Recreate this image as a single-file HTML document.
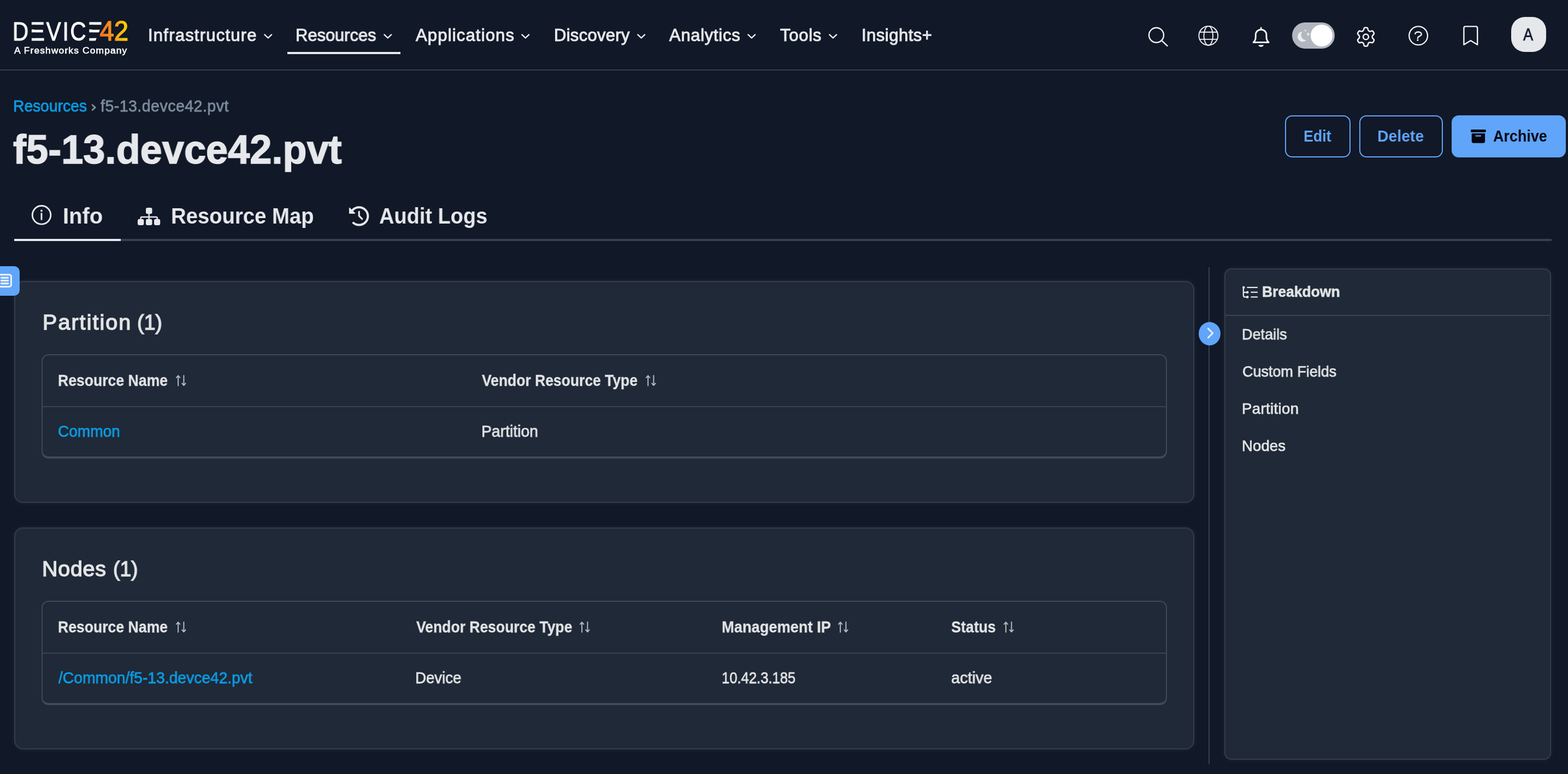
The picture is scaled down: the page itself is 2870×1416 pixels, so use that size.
<!DOCTYPE html>
<html lang="en">
<head>
<meta charset="utf-8">
<title>f5-13.devce42.pvt - Resources - Device42</title>
<style>
*{box-sizing:border-box;margin:0;padding:0}
html,body{width:2870px;height:1416px;overflow:hidden;background:#111827}
body{position:relative;font-family:"Liberation Sans",Arial,sans-serif;color:#e6e8ec}
a{color:inherit;text-decoration:none}
button{font:inherit;color:inherit;background:none;border:0}
svg{position:absolute;overflow:visible}
.t{will-change:transform;position:absolute;white-space:pre;transform-origin:0 0;font-weight:400;display:block}
.lnk{color:#0d9ce4}
.mut{color:#7a8a98}
.td,.th,.ctt{color:#e3e4e6}
h1,h2{font:inherit}
.btd{color:#030712}
.bt{color:#60a5fa}
.avt{color:#111827}
.lgm,.lgs{color:#fff}
.ic{fill:none;stroke:#e6e8ec;stroke-linecap:round;stroke-linejoin:round}
/* header */
.topbar .ic{stroke:#f2f3f5}
.topbar{position:absolute;left:0;top:0;width:2870px;height:129px;border-bottom:2px solid #363c4a}
.nav-active{position:absolute;left:526px;top:95px;width:207px;height:4px;background:#e6e8ec}
.toggle{position:absolute;left:2365px;top:41px;width:78px;height:48px;border-radius:24px;background:#b2b7bf}
.knob{position:absolute;left:34.3px;top:4px;width:40px;height:40px;border-radius:50%;background:#fff}
.avatar{position:absolute;left:2766px;top:31px;width:64px;height:64px;border-radius:25px;background:#e5e7eb}
/* page head */
.btn{position:absolute;top:211px;height:77px;display:block;border:2px solid #60a5fa;border-radius:13px}
.btn.primary{background:#60a5fa}
.tabline{position:absolute;left:26px;top:437px;width:2814px;height:4px;background:#383f4e}
.tabline i{position:absolute;left:0;top:0;width:195px;height:4px;background:#e6e8ec}
/* cards */
.card{position:absolute;background:#1f2937;border:2px solid #343c4a;border-radius:16px;box-shadow:0 0 8px rgba(255,255,255,.075)}
.tbl{position:absolute;border:2px solid #404956;border-bottom-width:4px;border-radius:13px}
.tbl .hr{position:absolute;left:0;right:0;top:93px;height:2px;background:#3a4350}
.sidetab{position:absolute;left:0;top:487px;width:36px;height:54px;background:#60a5fa;border-radius:0 10px 10px 0}
.vline{position:absolute;left:2212px;top:489px;width:2px;height:909px;background:#383f4e}
.collapse{position:absolute;left:2194px;top:589px;width:40px;height:43px;border-radius:50%;background:#60a5fa}
.bkline{position:absolute;left:0;right:0;top:83px;height:2px;background:#3b4452}
.srt path{fill:none;stroke:#b5b9c1;stroke-width:2;stroke-linecap:round;stroke-linejoin:round}
#n1{font-size:31px;line-height:37px;-webkit-text-stroke:1.0px currentColor;letter-spacing:1.22px;left:270.8px;top:46.0px;}
#n2{font-size:31px;line-height:37px;-webkit-text-stroke:1.0px currentColor;transform:scaleX(0.9945);left:541.1px;top:46.0px;}
#n3{font-size:31px;line-height:37px;-webkit-text-stroke:1.0px currentColor;letter-spacing:1.17px;left:761.0px;top:46.0px;}
#n4{font-size:31px;line-height:37px;-webkit-text-stroke:1.0px currentColor;letter-spacing:0.30px;left:1013.9px;top:46.0px;}
#n5{font-size:31px;line-height:37px;-webkit-text-stroke:1.0px currentColor;letter-spacing:0.70px;left:1225.0px;top:46.0px;}
#n6{font-size:31px;line-height:37px;-webkit-text-stroke:1.0px currentColor;letter-spacing:0.72px;left:1428.4px;top:46.0px;}
#n7{font-size:31px;line-height:37px;-webkit-text-stroke:1.0px currentColor;letter-spacing:0.50px;left:1576.6px;top:46.0px;}
#lg1{font-size:48.7px;line-height:58px;-webkit-text-stroke:1.0px currentColor;letter-spacing:3.37px;transform:scaleX(0.8300);left:22.8px;top:27.7px;}
#lg2{font-size:17.4px;line-height:21px;-webkit-text-stroke:0.6px currentColor;letter-spacing:1.14px;left:25.7px;top:81.5px;}
#bc1{font-size:28.6px;line-height:34px;-webkit-text-stroke:0.8px currentColor;transform:scaleX(0.9873);left:23.5px;top:176.8px;}
#bc2{font-size:28.6px;line-height:34px;-webkit-text-stroke:0.8px currentColor;letter-spacing:0.44px;left:184.3px;top:176.8px;}
#h1{font-size:75px;line-height:90px;font-weight:700;-webkit-text-stroke:1.5px currentColor;transform:scaleX(0.9622);left:24.0px;top:228.1px;}
#tb1{font-size:40.5px;line-height:49px;font-weight:700;transform:scaleX(0.9857);left:115.0px;top:371.2px;}
#tb2{font-size:40.5px;line-height:49px;font-weight:700;transform:scaleX(0.9449);left:312.6px;top:371.2px;}
#tb3{font-size:40.5px;line-height:49px;font-weight:700;transform:scaleX(0.9368);left:693.8px;top:371.2px;}
#b1{font-size:29.5px;line-height:35px;font-weight:700;transform:scaleX(0.9056);left:32.2px;top:18.1px;}
#b2{font-size:29.5px;line-height:35px;font-weight:700;transform:scaleX(0.9605);left:31.1px;top:18.1px;}
#b3{font-size:29.5px;line-height:35px;font-weight:700;transform:scaleX(0.9123);left:73.9px;top:18.1px;}
#c1a{font-size:39.5px;line-height:47px;-webkit-text-stroke:1.4px currentColor;letter-spacing:2.05px;left:49.6px;top:50.3px;}
#c1b{font-size:39.5px;line-height:47px;-webkit-text-stroke:1.4px currentColor;transform:scaleX(0.9511);left:223.0px;top:50.3px;}
#c2a{font-size:39.5px;line-height:47px;-webkit-text-stroke:1.4px currentColor;letter-spacing:0.72px;left:49.3px;top:50.3px;}
#c2b{font-size:39.5px;line-height:47px;-webkit-text-stroke:1.4px currentColor;transform:scaleX(0.9444);left:178.6px;top:50.3px;}
#t1h1{font-size:30px;line-height:36px;font-weight:700;-webkit-text-stroke:0.3px currentColor;transform:scaleX(0.8862);left:28.4px;top:27.6px;}
#t1h2{font-size:30px;line-height:36px;font-weight:700;-webkit-text-stroke:0.3px currentColor;transform:scaleX(0.8826);left:804.3px;top:27.6px;}
#t1c1{font-size:29.0px;line-height:35px;-webkit-text-stroke:0.75px currentColor;transform:scaleX(0.9670);left:28.4px;top:121.7px;}
#t1c2{font-size:29.0px;line-height:35px;-webkit-text-stroke:0.75px currentColor;transform:scaleX(0.9767);left:803.0px;top:121.7px;}
#t2h1{font-size:30px;line-height:36px;font-weight:700;-webkit-text-stroke:0.3px currentColor;transform:scaleX(0.8862);left:28.4px;top:27.6px;}
#t2h2{font-size:30px;line-height:36px;font-weight:700;-webkit-text-stroke:0.3px currentColor;transform:scaleX(0.8839);left:683.7px;top:27.6px;}
#t2h3{font-size:30px;line-height:36px;font-weight:700;-webkit-text-stroke:0.3px currentColor;transform:scaleX(0.9083);left:1242.7px;top:27.6px;}
#t2h4{font-size:30px;line-height:36px;font-weight:700;-webkit-text-stroke:0.3px currentColor;transform:scaleX(0.8900);left:1663.2px;top:27.6px;}
#t2c1{font-size:29.0px;line-height:35px;-webkit-text-stroke:0.75px currentColor;transform:scaleX(0.9742);left:28.6px;top:121.7px;}
#t2c2{font-size:29.0px;line-height:35px;-webkit-text-stroke:0.75px currentColor;transform:scaleX(0.9523);left:682.4px;top:121.7px;}
#t2c3{font-size:29.0px;line-height:35px;-webkit-text-stroke:0.75px currentColor;transform:scaleX(0.8820);left:1242.8px;top:121.7px;}
#t2c4{font-size:29.0px;line-height:35px;-webkit-text-stroke:0.75px currentColor;transform:scaleX(0.9878);left:1663.1px;top:121.7px;}
#bk0{font-size:28.2px;line-height:34px;font-weight:700;-webkit-text-stroke:0.6px currentColor;transform:scaleX(0.9387);left:67.4px;top:23.4px;}
#bk1{font-size:27.6px;line-height:33px;-webkit-text-stroke:0.75px currentColor;transform:scaleX(0.9793);left:30.3px;top:102.2px;}
#bk2{font-size:27.6px;line-height:33px;-webkit-text-stroke:0.75px currentColor;transform:scaleX(0.9766);left:30.9px;top:170.3px;}
#bk3{font-size:27.6px;line-height:33px;-webkit-text-stroke:0.75px currentColor;letter-spacing:0.36px;left:30.3px;top:238.4px;}
#bk4{font-size:27.6px;line-height:33px;-webkit-text-stroke:0.75px currentColor;letter-spacing:0.07px;left:30.3px;top:306.4px;}
#av{font-size:32px;line-height:38px;-webkit-text-stroke:0.7px currentColor;transform:scaleX(0.8500);left:22.1px;top:12.6px;}
</style>
</head>
<body>
<header class="topbar">
  <a class="logo" href="#" aria-label="Device42, a Freshworks company"><span id="lg1" class="t lgm">DEVICE</span><svg class="noink" style="left:0;top:0" width="240" height="128" viewBox="0 0 240 128" aria-hidden="true"><path fill="#111827" d="M55 45.3h9v8.5h-9z M55 59.3h9v10.4h-9z M160 45.3h9.3v8.5h-9.3z M160 59.3h9.3v10.4h-9.3z M186.6 45.3H191V76H174.2z"/></svg><svg class="l42" style="left:0;top:0" width="240" height="128" viewBox="0 0 240 128"><defs><linearGradient id="g42" gradientUnits="userSpaceOnUse" x1="183" y1="0" x2="233" y2="0"><stop offset="0" stop-color="#f26f21"/><stop offset="0.45" stop-color="#f7941d"/><stop offset="1" stop-color="#ffd200"/></linearGradient></defs><text x="182.4" y="73.5" font-family="'Liberation Sans',Arial,sans-serif" font-size="50" textLength="52.6" lengthAdjust="spacingAndGlyphs" fill="url(#g42)" stroke="url(#g42)" stroke-width="1.4">42</text></svg><span id="lg2" class="t lgs">A Freshworks Company</span></a>
  <nav class="mainnav" aria-label="Main">
    <a href="#"><span id="n1" class="t nv">Infrastructure</span><svg class="chev" style="left:482.6px;top:62px" width="16" height="9" viewBox="0 0 16 9" aria-hidden="true"><path class="ic" stroke-width="2.4" d="M1.4 1.4 L7.75 7.5 L14.1 1.4"/></svg></a>
    <a href="#" aria-current="page"><span id="n2" class="t nv">Resources</span><svg class="chev" style="left:701.9px;top:62px" width="16" height="9" viewBox="0 0 16 9" aria-hidden="true"><path class="ic" stroke-width="2.4" d="M1.4 1.4 L7.75 7.5 L14.1 1.4"/></svg></a>
    <a href="#"><span id="n3" class="t nv">Applications</span><svg class="chev" style="left:954.1px;top:62px" width="16" height="9" viewBox="0 0 16 9" aria-hidden="true"><path class="ic" stroke-width="2.4" d="M1.4 1.4 L7.75 7.5 L14.1 1.4"/></svg></a>
    <a href="#"><span id="n4" class="t nv">Discovery</span><svg class="chev" style="left:1165.6px;top:62px" width="16" height="9" viewBox="0 0 16 9" aria-hidden="true"><path class="ic" stroke-width="2.4" d="M1.4 1.4 L7.75 7.5 L14.1 1.4"/></svg></a>
    <a href="#"><span id="n5" class="t nv">Analytics</span><svg class="chev" style="left:1368.2px;top:62px" width="16" height="9" viewBox="0 0 16 9" aria-hidden="true"><path class="ic" stroke-width="2.4" d="M1.4 1.4 L7.75 7.5 L14.1 1.4"/></svg></a>
    <a href="#"><span id="n6" class="t nv">Tools</span><svg class="chev" style="left:1517.3px;top:62px" width="16" height="9" viewBox="0 0 16 9" aria-hidden="true"><path class="ic" stroke-width="2.4" d="M1.4 1.4 L7.75 7.5 L14.1 1.4"/></svg></a>
    <a href="#"><span id="n7" class="t nv">Insights+</span></a>
    <div class="nav-active"></div>
  </nav>
  <div class="tools">
    <button class="ib" aria-label="Search"><svg style="left:2100px;top:48px" width="40" height="40" viewBox="0 0 40 40"><circle class="ic" stroke-width="2.4" cx="16.5" cy="16.3" r="13.5"/><path class="ic" stroke-width="2.4" d="M26 25.8 L36.5 35.9"/></svg></button>
    <button class="ib" aria-label="Language"><svg style="left:2192px;top:45px" width="40" height="40" viewBox="0 0 40 40"><circle class="ic" stroke-width="1.9" cx="19.8" cy="20.3" r="17.4"/><ellipse class="ic" stroke-width="1.9" cx="19.8" cy="20.3" rx="8.3" ry="17.4"/><path class="ic" stroke-width="1.9" d="M3.8 13.8 H35.8 M3.8 26.9 H35.8"/></svg></button>
    <button class="ib" aria-label="Notifications"><svg style="left:2292px;top:49px" width="32" height="37" viewBox="0 0 32 37"><path class="ic" stroke-width="2.9" d="M2.1 28.5 C4.6 26.3 6.3 23.4 6.3 19 L6.3 14.8 C6.3 9 10.6 5.3 16.15 5.3 C21.7 5.3 26 9 26 14.8 L26 19 C26 23.4 27.7 26.3 30.2 28.5 Z M16.15 2 V3.6"/><path fill="#f0f1f4" d="M11.4 33.3 H20.9 A4.75 3.5 0 0 1 11.4 33.3 Z"/></svg></button>
    <div class="toggle" role="switch" aria-checked="true" aria-label="Dark mode"><svg style="left:0;top:0" width="78" height="48" viewBox="0 0 78 48"><path fill="#eceef1" d="M18.99 16.90 A9.2 9.2 0 1 0 25.91 32.40 A9.2 9.2 0 0 1 18.99 16.90Z"/><path fill="#eceef1" d="M24.3 11.5 Q24.3 14.7 27.5 14.7 Q24.3 14.7 24.3 17.9 Q24.3 14.7 21.1 14.7 Q24.3 14.7 24.3 11.5Z"/><path fill="#eceef1" d="M29.4 16.7 Q29.4 21.5 34.199999999999996 21.5 Q29.4 21.5 29.4 26.3 Q29.4 21.5 24.599999999999998 21.5 Q29.4 21.5 29.4 16.7Z"/></svg><div class="knob"></div></div>
    <button class="ib" aria-label="Settings"><svg style="left:2483.2px;top:49.2px" width="34" height="37" viewBox="0 0 34 37"><path class="ic" stroke-width="2.5" d="M11.2 7.9 Q12.8 6.9 13.2 4.8 L13.4 3.6 Q13.8 1.4 16.0 1.4 L18.0 1.4 Q20.2 1.4 20.6 3.6 L20.8 4.8 Q21.2 6.9 22.8 7.9 L22.8 7.9 Q24.4 8.8 26.5 8.1 L27.4 7.8 Q29.5 7.1 30.5 9.0 L31.6 10.8 Q32.6 12.8 31.0 14.3 L30.2 15.0 Q28.6 16.5 28.6 18.4 L28.6 18.4 Q28.6 20.3 30.2 21.8 L31.0 22.5 Q32.6 24.0 31.6 26.0 L30.5 27.8 Q29.5 29.7 27.4 29.0 L26.5 28.7 Q24.4 28.0 22.8 28.9 L22.8 28.9 Q21.2 29.9 20.8 32.0 L20.6 33.2 Q20.2 35.4 18.0 35.4 L16.0 35.4 Q13.8 35.4 13.4 33.2 L13.2 32.0 Q12.8 29.9 11.2 28.9 L11.2 28.9 Q9.6 28.0 7.5 28.7 L6.6 29.0 Q4.5 29.7 3.5 27.8 L2.4 26.0 Q1.4 24.0 3.0 22.5 L3.8 21.8 Q5.4 20.3 5.4 18.4 L5.4 18.4 Q5.4 16.5 3.8 15.0 L3.0 14.3 Q1.4 12.8 2.4 10.8 L3.5 9.0 Q4.5 7.1 6.6 7.8 L7.5 8.1 Q9.6 8.8 11.2 7.9 Z"/><circle class="ic" stroke-width="2.5" cx="17" cy="18.4" r="4.9"/></svg></button>
    <button class="ib" aria-label="Help"><svg style="left:2577px;top:46px" width="40" height="40" viewBox="0 0 40 40"><circle class="ic" stroke-width="2.3" cx="19.1" cy="19.3" r="16.9"/><path class="ic" stroke-width="2.3" d="M13.3 16 C13.3 13.8 15.5 12.5 18.7 12.5 C22 12.5 24.8 13.9 24.8 16.4 C24.8 18.6 22.7 19.4 20.6 20.5 C18.8 21.4 17.9 22.4 17.9 24.3"/><circle fill="#e6e8ec" cx="17.9" cy="27.3" r="1.6"/></svg></button>
    <button class="ib" aria-label="Bookmarks"><svg style="left:2678px;top:47px" width="28" height="37" viewBox="0 0 28 37"><path class="ic" stroke-width="2.4" stroke-linejoin="miter" d="M1.4 34.8 L1.4 4.4 Q1.4 1.4 4.4 1.4 L23.2 1.4 Q26.2 1.4 26.2 4.4 L26.2 34.8 L13.8 27.2 Z"/></svg></button>
    <div class="avatar"><span id="av" class="t avt">A</span></div>
  </div>
</header>
<main>
  <nav class="crumbs" aria-label="Breadcrumb"><a href="#"><span id="bc1" class="t lnk">Resources</span></a><svg style="left:167px;top:190px" width="10" height="14" viewBox="0 0 10 14"><path fill="none" stroke="#8492a0" stroke-width="2.8" stroke-linecap="round" stroke-linejoin="round" d="M2 2 L7.2 6.6 L2 11.2"/></svg><span id="bc2" class="t mut">f5-13.devce42.pvt</span></nav>
  <h1 id="h1" class="t">f5-13.devce42.pvt</h1>
  <div class="actions">
    <button class="btn" style="left:2352px;width:120px"><span id="b1" class="t bt">Edit</span></button>
    <button class="btn" style="left:2488px;width:153px"><span id="b2" class="t bt">Delete</span></button>
    <button class="btn primary" style="left:2657px;width:209px"><svg style="left:32.6px;top:24.2px" width="28" height="25" viewBox="0 0 28 25"><g fill="#030712"><rect x="0" y="0" width="27.7" height="4.9" rx="1.4"/><path d="M1.7 7 H26.1 V21.2 Q26.1 24.7 22.6 24.7 H5.2 Q1.7 24.7 1.7 21.2 Z"/></g><rect x="8.3" y="10.5" width="10.9" height="2.2" rx="1.1" fill="#60a5fa"/></svg><span id="b3" class="t btd">Archive</span></button>
  </div>
  <nav class="tabs" aria-label="Sections">
    <a href="#" aria-current="true"><svg style="left:57px;top:374px" width="38" height="38" viewBox="0 0 38 38"><circle class="ic" stroke-width="2.9" cx="19.05" cy="19.3" r="16.8"/><circle fill="#e6e8ec" cx="18.95" cy="11.5" r="1.9"/><path class="ic" stroke-width="2.9" d="M18.95 16.6 V27.4"/></svg><span id="tb1" class="t tb">Info</span></a>
    <a href="#"><svg style="left:251.9px;top:379.7px" width="42" height="32" viewBox="0 0 42 32"><g fill="#e6e8ec"><rect x="15" y="0" width="11.5" height="11.2" rx="3"/><rect x="0" y="20.7" width="11.3" height="11.2" rx="3"/><rect x="15" y="20.7" width="11.5" height="11.2" rx="3"/><rect x="30" y="20.7" width="11.2" height="11.2" rx="3"/></g><path class="ic" stroke-width="2.4" d="M20.7 11 V21 M5.6 21 V19.2 Q5.6 17 7.8 17 H33.6 Q35.8 17 35.8 19.2 V21"/></svg><span id="tb2" class="t tb">Resource Map</span></a>
    <a href="#"><svg style="left:638px;top:376px" width="39" height="39" viewBox="0 0 39 39"><path class="ic" stroke-width="4" stroke-linecap="round" d="M7.74 7.94 A16.2 16.2 0 1 1 8.79 31.81"/><path fill="#e6e8ec" stroke="#e6e8ec" stroke-width="1.6" stroke-linejoin="round" d="M1.7 4.6 V14.1 H11.4 Z"/><path class="ic" stroke-width="3.2" d="M19.2 11.3 V18.8 L24.8 24.6"/></svg><span id="tb3" class="t tb">Audit Logs</span></a>
    <div class="tabline"><i></i></div>
  </nav>

  <section class="card" style="left:26px;top:514px;width:2160px;height:406px">
    <h2 id="c1" class="ct"><span id="c1a" class="t ctt">Partition</span> <span id="c1b" class="t ctt">(1)</span></h2>
    <div class="tbl" role="table" style="left:48px;top:132px;width:2060px;height:191px">
      <div role="row"><span id="t1h1" class="t th">Resource Name</span><svg class="srt" style="left:243.7px;top:35px" width="19" height="22" viewBox="0 0 19 22" aria-hidden="true"><path d="M4.1 20.6 V2.3 M0.9 5.9 L4.1 2.3 L7.3 5.9 M14.4 1.9 V20 M11.2 16.4 L14.4 20 L17.6 16.4"/></svg><span id="t1h2" class="t th">Vendor Resource Type</span><svg class="srt" style="left:1104px;top:35px" width="19" height="22" viewBox="0 0 19 22" aria-hidden="true"><path d="M4.1 20.6 V2.3 M0.9 5.9 L4.1 2.3 L7.3 5.9 M14.4 1.9 V20 M11.2 16.4 L14.4 20 L17.6 16.4"/></svg></div>
      <div class="hr"></div>
      <div role="row"><a href="#"><span id="t1c1" class="t lnk">Common</span></a><span id="t1c2" class="t td">Partition</span></div>
    </div>
  </section>

  <section class="card" style="left:26px;top:965px;width:2160px;height:406px">
    <h2 id="c2" class="ct"><span id="c2a" class="t ctt">Nodes</span> <span id="c2b" class="t ctt">(1)</span></h2>
    <div class="tbl" role="table" style="left:48px;top:132px;width:2060px;height:191px">
      <div role="row"><span id="t2h1" class="t th">Resource Name</span><svg class="srt" style="left:243.7px;top:35px" width="19" height="22" viewBox="0 0 19 22" aria-hidden="true"><path d="M4.1 20.6 V2.3 M0.9 5.9 L4.1 2.3 L7.3 5.9 M14.4 1.9 V20 M11.2 16.4 L14.4 20 L17.6 16.4"/></svg><span id="t2h2" class="t th">Vendor Resource Type</span><svg class="srt" style="left:983.2px;top:35px" width="19" height="22" viewBox="0 0 19 22" aria-hidden="true"><path d="M4.1 20.6 V2.3 M0.9 5.9 L4.1 2.3 L7.3 5.9 M14.4 1.9 V20 M11.2 16.4 L14.4 20 L17.6 16.4"/></svg><span id="t2h3" class="t th">Management IP</span><svg class="srt" style="left:1456px;top:35px" width="19" height="22" viewBox="0 0 19 22" aria-hidden="true"><path d="M4.1 20.6 V2.3 M0.9 5.9 L4.1 2.3 L7.3 5.9 M14.4 1.9 V20 M11.2 16.4 L14.4 20 L17.6 16.4"/></svg><span id="t2h4" class="t th">Status</span><svg class="srt" style="left:1758.9px;top:35px" width="19" height="22" viewBox="0 0 19 22" aria-hidden="true"><path d="M4.1 20.6 V2.3 M0.9 5.9 L4.1 2.3 L7.3 5.9 M14.4 1.9 V20 M11.2 16.4 L14.4 20 L17.6 16.4"/></svg></div>
      <div class="hr"></div>
      <div role="row"><a href="#"><span id="t2c1" class="t lnk">/Common/f5-13.devce42.pvt</span></a><span id="t2c2" class="t td">Device</span><span id="t2c3" class="t td">10.42.3.185</span><span id="t2c4" class="t td">active</span></div>
    </div>
  </section>

  <button class="sidetab" aria-label="Toggle panel"><svg style="left:0;top:0" width="36" height="54" viewBox="0 0 36 54"><rect x="-6" y="15.4" width="26.4" height="22" rx="3.5" fill="none" stroke="#f1f1f2" stroke-width="3"/><path fill="none" stroke="#f1f1f2" stroke-width="3.2" stroke-linecap="round" d="M2.4 21.1 H14.8 M2.4 26.3 H14.8 M2.4 31.6 H14.8"/></svg></button>
  <div class="vline"></div>
  <button class="collapse" aria-label="Collapse breakdown"><svg style="left:0;top:0" width="40" height="43" viewBox="0 0 40 43"><path fill="none" stroke="#eaeef5" stroke-width="3" stroke-linecap="round" stroke-linejoin="round" d="M17.4 12.2 L25.6 20.5 L17.4 28.8"/></svg></button>
  <aside class="card" style="left:2241px;top:491px;width:598px;height:899px;border-radius:13px">
    <svg style="left:31px;top:30px" width="30" height="24" viewBox="0 0 30 24"><g fill="#e6e8ec"><circle cx="2.3" cy="2.7" r="2.3"/><circle cx="9.2" cy="11.8" r="2.3"/><circle cx="9.2" cy="20.4" r="2.3"/></g><path class="ic" stroke-width="2.3" d="M1.9 2.7 V17.4 Q1.9 20.4 4.9 20.4 H9.2 M1.9 11.8 H9.2 M9.3 2.8 H27.1 M16.3 11.7 H27.1 M16.3 20.3 H27.1"/></svg><span id="bk0" class="t th">Breakdown</span>
    <div class="bkline"></div>
    <nav aria-label="Breakdown"><a href="#"><span id="bk1" class="t td">Details</span></a><a href="#"><span id="bk2" class="t td">Custom Fields</span></a><a href="#"><span id="bk3" class="t td">Partition</span></a><a href="#"><span id="bk4" class="t td">Nodes</span></a></nav>
  </aside>
</main>
</body>
</html>
